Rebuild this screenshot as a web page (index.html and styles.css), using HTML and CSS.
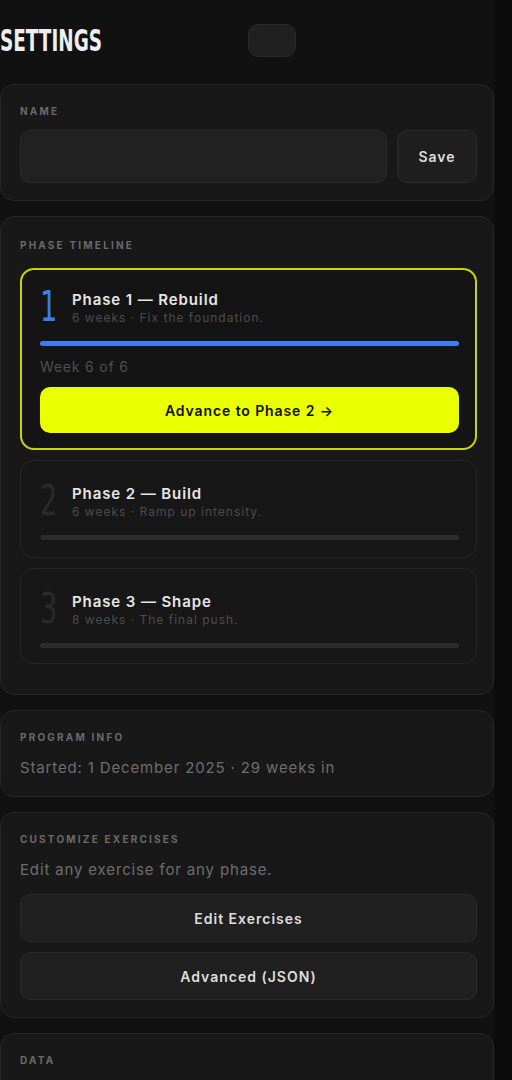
FILE: index.html
```html
<!DOCTYPE html>
<html lang="en">
<head>
    <meta charset="UTF-8">
    <meta name="viewport" content="width=device-width, initial-scale=1.0">
    <title>Settings</title>
    <link rel="stylesheet" href="styles.css">
</head>
<body>

<div class="page">

    <div class="topbar">
        <h1 class="title">SETTINGS</h1>
        <div class="pill"></div>
    </div>

    <div class="card card-name">
        <div class="label">NAME</div>
        <div class="name-row">
            <input type="text" class="name-input">
            <button class="btn-save">Save</button>
        </div>
    </div>

    <div class="card card-timeline">
        <div class="label">PHASE TIMELINE</div>

        <div class="phase phase-active">
            <div class="phase-head">
                <div class="phase-num num-active">1</div>
                <div>
                    <div class="phase-title">Phase 1 — Rebuild</div>
                    <div class="phase-sub">6 weeks · Fix the foundation.</div>
                </div>
            </div>
            <div class="bar"><div class="bar-fill" style="width: 100%"></div></div>
            <div class="week">Week 6 of 6</div>
            <button class="btn-advance">Advance to Phase 2 →</button>
        </div>

        <div class="phase">
            <div class="phase-head">
                <div class="phase-num">2</div>
                <div>
                    <div class="phase-title">Phase 2 — Build</div>
                    <div class="phase-sub">6 weeks · Ramp up intensity.</div>
                </div>
            </div>
            <div class="bar"></div>
        </div>

        <div class="phase">
            <div class="phase-head">
                <div class="phase-num">3</div>
                <div>
                    <div class="phase-title">Phase 3 — Shape</div>
                    <div class="phase-sub">8 weeks · The final push.</div>
                </div>
            </div>
            <div class="bar"></div>
        </div>
    </div>

    <div class="card">
        <div class="label">PROGRAM INFO</div>
        <div class="info">Started: 1 December 2025 · 29 weeks in</div>
    </div>

    <div class="card card-custom">
        <div class="label">CUSTOMIZE EXERCISES</div>
        <div class="info">Edit any exercise for any phase.</div>
        <button class="btn-wide">Edit Exercises</button>
        <button class="btn-wide">Advanced (JSON)</button>
    </div>

    <div class="card">
        <div class="label">DATA</div>
        <div class="info">&nbsp;</div>
    </div>

</div>

</body>
</html>
```

FILE: styles.css
```css
body {
    margin: 0;
    background: #0b0b0b;
    font-family: Inter, "Noto Sans", sans-serif;
    color: #e8e8e8;
}

.page {
    width: 495px;
    height: 1080px;
    overflow: hidden;
    background: #111111;
    padding-top: 24px;
    box-sizing: border-box;
}

.topbar {
    display: flex;
    align-items: center;
    height: 33px;
    margin-bottom: 27px;
}

.title {
    margin: 0;
    width: 101px;
    font-family: "Liberation Sans Narrow", "DejaVu Sans Condensed", sans-serif;
    font-weight: bold;
    font-size: 31px;
    line-height: 33px;
    color: #eeeeee;
    white-space: nowrap;
    transform: scaleX(0.66);
    transform-origin: left center;
}

.pill {
    margin-left: 147px;
    width: 48px;
    height: 33px;
    border-radius: 10px;
    background: #202020;
    border: 1px solid #2a2a2a;
    box-sizing: border-box;
}

.card {
    background: #181818;
    border: 1px solid #272727;
    border-radius: 14px;
    padding: 19px 16px 19px 19px;
    margin-bottom: 15px;
    width: 494px;
    box-sizing: border-box;
}

.card-name {
    padding-bottom: 17px;
}

.card-timeline {
    padding-top: 21px;
    padding-bottom: 20px;
}

.card-custom {
    padding-bottom: 17px;
}

.label {
    font-size: 10px;
    font-weight: 700;
    letter-spacing: 2.2px;
    color: #6a6a6a;
    line-height: 14px;
    margin-bottom: 12px;
}

.card-timeline .label {
    margin-bottom: 16px;
}

.name-row {
    display: flex;
    gap: 10px;
}

.name-input {
    flex: 1;
    height: 53px;
    background: #212121;
    border: 1px solid #2b2b2b;
    border-radius: 10px;
    box-sizing: border-box;
}

.btn-save {
    width: 80px;
    height: 53px;
    background: #1f1f1f;
    border: 1px solid #2b2b2b;
    border-radius: 10px;
    color: #dddddd;
    font-family: Inter, sans-serif;
    font-weight: 600;
    font-size: 14px;
    letter-spacing: 1px;
}

.phase {
    border: 1px solid #272727;
    border-radius: 14px;
    background: #171717;
    padding: 23px 17px 17px 19px;
    margin-bottom: 10px;
}

.phase:last-child {
    padding-bottom: 15px;
}

.phase-head {
    display: flex;
    align-items: flex-start;
    gap: 16px;
    margin-bottom: 15px;
}

.phase-active {
    border: 2px solid #c9d600;
    background: #141414;
    padding: 20px 16px 15px 18px;
}

.phase-num {
    font-family: "Liberation Sans Narrow", "DejaVu Sans Condensed", sans-serif;
    font-size: 42px;
    line-height: 34px;
    color: #2a2a2a;
    width: 16px;
    transform: scaleX(0.72);
    transform-origin: left top;
}

.num-active {
    color: #3d7cf2;
}

.phase-title {
    font-size: 15px;
    font-weight: 600;
    line-height: 20px;
    letter-spacing: 0.9px;
    color: #e6e6e6;
}

.phase-sub {
    font-size: 12px;
    line-height: 16px;
    letter-spacing: 1px;
    color: #4c4c4c;
}

.bar {
    height: 5px;
    border-radius: 3px;
    background: #2c2c2c;
}

.bar-fill {
    height: 100%;
    border-radius: 3px;
    background: #3d7cf2;
}

.week {
    font-size: 14px;
    line-height: 16px;
    letter-spacing: 0.8px;
    color: #4f4f4f;
    margin: 13px 0 12px;
}

.btn-advance {
    display: block;
    width: 100%;
    height: 46px;
    border: none;
    border-radius: 10px;
    background: #eaff00;
    color: #111111;
    font-family: Inter, sans-serif;
    font-weight: 600;
    font-size: 14px;
    letter-spacing: 0.9px;
}

.info {
    font-size: 15px;
    line-height: 18px;
    letter-spacing: 0.85px;
    color: #6e6e6e;
    margin-top: 15px;
}

.btn-wide {
    display: block;
    width: 100%;
    height: 48px;
    margin-top: 10px;
    background: #202020;
    border: 1px solid #2a2a2a;
    border-radius: 10px;
    color: #dddddd;
    font-family: Inter, sans-serif;
    font-weight: 600;
    font-size: 14px;
    letter-spacing: 1px;
}

.info + .btn-wide {
    margin-top: 15px;
}
```
